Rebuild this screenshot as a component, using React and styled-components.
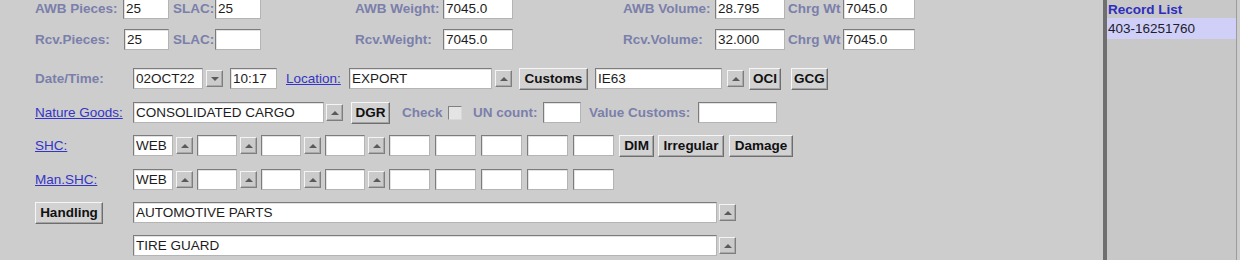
import React from 'react'
import styled, { createGlobalStyle } from 'styled-components'

const GlobalStyle = createGlobalStyle`
  html, body {
    margin: 0;
    padding: 0;
    background: #cdcdcd;
  }
  body {
    font-family: "Liberation Sans", Arial, sans-serif;
    overflow: hidden;
  }
`

const Screen = styled.div`
  display: flex;
  width: 1240px;
  height: 260px;
  overflow: hidden;
  background: #cdcdcd;
`

const Form = styled.div`
  flex: 0 0 1103px;
  display: flex;
  flex-direction: column;
  margin-top: -2px;
`

const Row = styled.div`
  display: flex;
  align-items: center;
  height: 21px;
  margin-top: ${p => p.$mt || 0}px;
  padding-left: ${p => p.$pl || 35}px;
`

const Label = styled.span`
  flex: 0 0 ${p => p.$w}px;
  margin-left: ${p => p.$ml || 0}px;
  font-size: 13.5px;
  font-weight: bold;
  color: #7b7fab;
  white-space: nowrap;
`

const Link = styled.a`
  flex: 0 0 ${p => p.$w}px;
  margin-left: ${p => p.$ml || 0}px;
  font-size: 13.5px;
  color: #3434c6;
  text-decoration: underline;
  white-space: nowrap;
  cursor: pointer;
`

const Field = styled.input`
  flex: 0 0 ${p => p.$w}px;
  width: ${p => p.$w}px;
  height: 21px;
  box-sizing: border-box;
  margin: 0 0 0 ${p => p.$ml || 0}px;
  padding: 0 2px;
  border: 1px solid;
  border-color: #7c7c7c #b4b4b4 #b4b4b4 #7c7c7c;
  box-shadow: inset 1px 1px 0 #e2e2e2;
  background: #fff;
  font-family: "Liberation Sans", Arial, sans-serif;
  font-size: 13.5px;
  color: #1c1c1c;
  outline: none;
`

const Combo = styled.span`
  flex: 0 0 17px;
  height: 17px;
  box-sizing: border-box;
  margin-left: ${p => p.$ml || 0}px;
  display: flex;
  align-items: center;
  justify-content: center;
  background: #cbcbcb;
  border: 1px solid;
  border-color: #f4f4f4 #7e7e7e #7e7e7e #f4f4f4;
  box-shadow: inset -1px -1px 0 #a9a9a9;

  &::after {
    content: '';
    width: 0;
    height: 0;
    border-left: 4px solid transparent;
    border-right: 4px solid transparent;
    ${p => p.$down
      ? 'border-top: 4px solid #5a5a5a;'
      : 'border-bottom: 4px solid #5a5a5a;'}
  }
`

const Button = styled.button`
  flex: 0 0 ${p => p.$w}px;
  width: ${p => p.$w}px;
  height: 22px;
  box-sizing: border-box;
  margin: 0 0 0 ${p => p.$ml || 0}px;
  padding: 0;
  background: #d2d2d2;
  border: 1px solid;
  border-color: #f6f6f6 #6e6e6e #6e6e6e #f6f6f6;
  box-shadow: inset -1px -1px 0 #a4a4a4;
  font-family: "Liberation Sans", Arial, sans-serif;
  font-size: 13.5px;
  font-weight: bold;
  color: #111;
`

const CheckBox = styled.span`
  flex: 0 0 14px;
  height: 14px;
  box-sizing: border-box;
  background: #e4e4e4;
  border: 1px solid;
  border-color: #808080 #d8d8d8 #d8d8d8 #808080;
`

const Panel = styled.aside`
  flex: 0 0 134px;
  box-sizing: border-box;
  border-left: 4px solid #6f6f6f;
  border-right: 1px solid #9c9c9c;
  background: #c8c8c8;
  padding-top: 1px;
`

const PanelTitle = styled.div`
  padding-left: 1px;
  line-height: 17px;
  font-size: 13.5px;
  font-weight: bold;
  color: #2d2dc0;
`

const Record = styled.div`
  padding-left: 1px;
  height: 21px;
  line-height: 21px;
  font-size: 13.5px;
  color: #1d1d2d;
  background: ${p => (p.$selected ? '#cfcff7' : 'transparent')};
`

const Cell = ({ value = '', ...rest }) => <Field readOnly value={value} {...rest} />

const ShcRow = ({ label, first, mt, children }) => (
  <Row $mt={mt}>
    <Link $w={98}>{label}</Link>
    <Cell $w={40} value={first} />
    <Combo $ml={3} />
    <Cell $w={40} $ml={4} />
    <Combo $ml={3} />
    <Cell $w={40} $ml={4} />
    <Combo $ml={3} />
    <Cell $w={40} $ml={4} />
    <Combo $ml={3} />
    <Cell $w={41} $ml={4} />
    <Cell $w={41} $ml={5} />
    <Cell $w={41} $ml={5} />
    <Cell $w={41} $ml={5} />
    <Cell $w={41} $ml={5} />
    {children}
  </Row>
)

const App = () => {
  return (
    <Screen>
      <GlobalStyle />
      <Form>
        <Row>
          <Label $w={88}>AWB Pieces:</Label>
          <Cell $w={46} value="25" />
          <Label $w={42} $ml={4}>SLAC:</Label>
          <Cell $w={46} value="25" />
          <Label $w={88} $ml={94}>AWB Weight:</Label>
          <Cell $w={70} value="7045.0" />
          <Label $w={92} $ml={110}>AWB Volume:</Label>
          <Cell $w={70} value="28.795" />
          <Label $w={55} $ml={3}>Chrg Wt</Label>
          <Cell $w={72} value="7045.0" />
        </Row>

        <Row $mt={10}>
          <Label $w={89}>Rcv.Pieces:</Label>
          <Cell $w={45} value="25" />
          <Label $w={42} $ml={4}>SLAC:</Label>
          <Cell $w={46} />
          <Label $w={88} $ml={94}>Rcv.Weight:</Label>
          <Cell $w={70} value="7045.0" />
          <Label $w={92} $ml={110}>Rcv.Volume:</Label>
          <Cell $w={70} value="32.000" />
          <Label $w={55} $ml={3}>Chrg Wt</Label>
          <Cell $w={72} value="7045.0" />
        </Row>

        <Row $mt={18}>
          <Label $w={98}>Date/Time:</Label>
          <Cell $w={70} value="02OCT22" />
          <Combo $ml={3} $down />
          <Cell $w={47} $ml={7} value="10:17" />
          <Link $w={63} $ml={9}>Location:</Link>
          <Cell $w={143} value="EXPORT" />
          <Combo $ml={3} />
          <Button $w={69} $ml={7}>Customs</Button>
          <Cell $w={127} $ml={7} value="IE63" />
          <Combo $ml={5} />
          <Button $w={32} $ml={5}>OCI</Button>
          <Button $w={37} $ml={10}>GCG</Button>
        </Row>

        <Row $mt={13}>
          <Link $w={98}>Nature Goods:</Link>
          <Cell $w={191} value="CONSOLIDATED CARGO" />
          <Combo $ml={2} />
          <Button $w={39} $ml={8}>DGR</Button>
          <Label $w={46} $ml={12}>Check</Label>
          <CheckBox />
          <Label $w={70} $ml={11}>UN count:</Label>
          <Cell $w={38} />
          <Label $w={109} $ml={8}>Value Customs:</Label>
          <Cell $w={79} />
        </Row>

        <ShcRow label="SHC:" first="WEB" mt={12}>
          <Button $w={35} $ml={5}>DIM</Button>
          <Button $w={66} $ml={4}>Irregular</Button>
          <Button $w={64} $ml={5}>Damage</Button>
        </ShcRow>

        <ShcRow label="Man.SHC:" first="WEB" mt={13} />

        <Row $mt={12}>
          <Button $w={68}>Handling</Button>
          <Cell $w={584} $ml={30} value="AUTOMOTIVE PARTS" />
          <Combo $ml={2} />
        </Row>

        <Row $mt={12} $pl={133}>
          <Cell $w={584} value="TIRE GUARD" />
          <Combo $ml={2} />
        </Row>
      </Form>

      <Panel>
        <PanelTitle>Record List</PanelTitle>
        <Record $selected>403-16251760</Record>
      </Panel>
    </Screen>
  )
}

export default App
